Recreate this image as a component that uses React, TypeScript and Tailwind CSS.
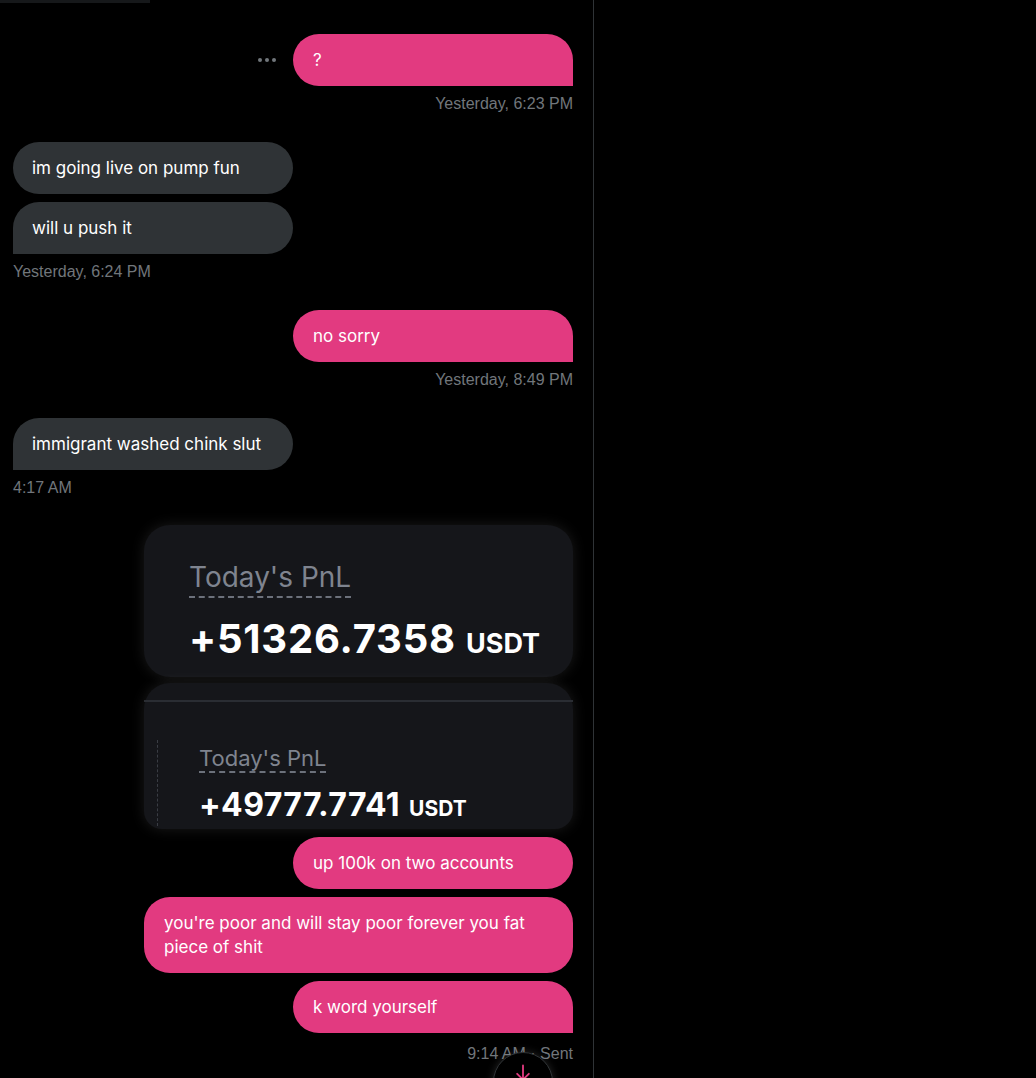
import React from 'react'

const sans = { fontFamily: 'Inter, "Noto Sans", sans-serif' }
const meta = { fontFamily: '"Liberation Sans", Arial, sans-serif' }

function Sent({ text, last, wide }: { text: string; last?: boolean; wide?: boolean }) {
  return (
    <div className="flex justify-end">
      <div
        className={
          'bg-[#e23a80] text-white text-[17px] leading-[24px] px-[20px] py-[14px] rounded-[26px] ' +
          (wide ? 'w-[429px] ' : 'w-[280px] ') +
          (last ? 'rounded-br-none' : '')
        }
        style={sans}
      >
        {text}
      </div>
    </div>
  )
}

function Received({ text, last }: { text: string; last?: boolean }) {
  return (
    <div className="flex justify-start">
      <div
        className={
          'bg-[#2f3336] text-white text-[17px] leading-[24px] px-[19px] py-[14px] rounded-[26px] w-[280px] ' +
          (last ? 'rounded-bl-none' : '')
        }
        style={sans}
      >
        {text}
      </div>
    </div>
  )
}

function Stamp({ children, right, gap }: { children: React.ReactNode; right?: boolean; gap?: string }) {
  return (
    <div
      className={(gap ?? 'mt-[8px]') + ' text-[16px] leading-[20px] text-[#71767b] ' + (right ? 'text-right' : 'text-left')}
      style={meta}
    >
      {children}
    </div>
  )
}

function PnlImage() {
  return (
    <div className="flex justify-end mt-[27px]" style={sans}>
      <div className="w-[429px] flex flex-col gap-[6px]">
        <div className="bg-[#15161a] rounded-[26px] h-[152px] pl-[45px] pt-[35px] shadow-[0_0_14px_rgba(255,255,255,0.10)]">
          <div className="inline-block text-[28px] leading-[34px] text-[#7f848f] border-b-2 border-dashed border-[#6c717b] pb-[2px]">
            Today's PnL
          </div>
          <div className="mt-[19px] flex items-baseline gap-[10px] text-white font-bold">
            <span className="text-[40px] leading-[44px] tracking-[0.8px]">+51326.7358</span>
            <span className="text-[27px]">USDT</span>
          </div>
        </div>
        <div className="bg-[#15161a] rounded-[26px] rounded-b-[18px] h-[146px] relative pt-[17px] shadow-[0_0_14px_rgba(255,255,255,0.10)]">
          <div className="h-[2px] bg-[#2a2d33]" />
          <div className="flex mt-[38px] pl-[13px]">
            <div className="w-0 h-[86px] border-l border-dashed border-[#3a3d44]" />
            <div className="pl-[41px] pt-[5px]">
              <div className="inline-block text-[22px] leading-[26px] text-[#7f848f] border-b-2 border-dashed border-[#6c717b]">
                Today's PnL
              </div>
              <div className="mt-[14px] flex items-baseline gap-[9px] text-white font-bold">
                <span className="text-[32px] leading-[36px] tracking-[0.4px]">+49777.7741</span>
                <span className="text-[21px]">USDT</span>
              </div>
            </div>
          </div>
        </div>
      </div>
    </div>
  )
}

export default function App() {
  return (
    <div className="w-[1036px] h-[1078px] bg-black overflow-hidden flex">
      <div className="w-[594px] h-full border-r border-[#2f3336] relative pl-[13px] pr-[20px] pt-[34px]">
        <div className="absolute left-0 top-0 w-[150px] h-[3px] bg-[#16181a]" />

        <div className="flex justify-end items-center gap-[17px]">
          <div className="flex gap-[3px]">
            <span className="w-[4px] h-[4px] rounded-full bg-[#71767b]" />
            <span className="w-[4px] h-[4px] rounded-full bg-[#71767b]" />
            <span className="w-[4px] h-[4px] rounded-full bg-[#71767b]" />
          </div>
          <div className="bg-[#e23a80] text-white text-[17px] leading-[24px] px-[20px] py-[14px] rounded-[26px] rounded-br-none w-[280px]" style={sans}>
            ?
          </div>
        </div>
        <Stamp right>Yesterday, 6:23 PM</Stamp>

        <div className="mt-[28px] flex flex-col gap-[8px]">
          <Received text="im going live on pump fun" />
          <Received text="will u push it" last />
        </div>
        <Stamp>Yesterday, 6:24 PM</Stamp>

        <div className="mt-[28px]">
          <Sent text="no sorry" last />
        </div>
        <Stamp right>Yesterday, 8:49 PM</Stamp>

        <div className="mt-[28px]">
          <Received text="immigrant washed chink slut" last />
        </div>
        <Stamp>4:17 AM</Stamp>

        <PnlImage />

        <div className="mt-[8px] flex flex-col gap-[8px]">
          <Sent text="up 100k on two accounts" />
          <Sent text="you're poor and will stay poor forever you fat piece of shit" wide />
          <Sent text="k word yourself" last />
        </div>
        <Stamp right gap="mt-[11px]">9:14 AM · Sent</Stamp>

        <div className="absolute left-[493px] top-[1052px] w-[60px] h-[60px] rounded-full bg-black border border-[#2f3336] shadow-[0_0_8px_rgba(255,255,255,0.15)] flex justify-center pt-[10px]">
          <svg width="20" height="20" viewBox="0 0 24 24" fill="none" stroke="#e23a80" strokeWidth="2.2" strokeLinecap="round" strokeLinejoin="round">
            <path d="M12 3v17" />
            <path d="M5 13l7 7 7-7" />
          </svg>
        </div>
      </div>
      <div className="flex-1 h-full bg-black" />
    </div>
  )
}
